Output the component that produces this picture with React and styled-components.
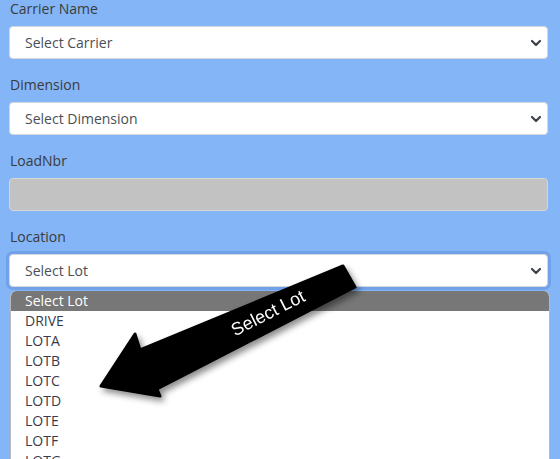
import React from "react";
import styled, { createGlobalStyle } from "styled-components";

const GlobalStyle = createGlobalStyle`
  html, body {
    margin: 0;
    padding: 0;
    background: #84b5f6;
    overflow: hidden;
  }
  body {
    font-family: "Open Sans", "Liberation Sans", sans-serif;
    font-size: 14px;
  }
`;

const Page = styled.div`
  position: relative;
  width: 560px;
  height: 459px;
  overflow: hidden;
`;

const Form = styled.div`
  display: flex;
  flex-direction: column;
  gap: 17px;
  padding-left: 9px;
  width: 539px;
`;

const Group = styled.div`
  display: flex;
  flex-direction: column;
`;

const Label = styled.label`
  display: block;
  line-height: 17px;
  margin-bottom: 9px;
  padding-left: 1px;
  color: #3b3b3b;
  font-size: 14px;
`;

const SelectBox = styled.div`
  box-sizing: border-box;
  height: 33px;
  display: flex;
  align-items: center;
  justify-content: space-between;
  padding: 0 5px 0 15px;
  background: #fff;
  border: 1px solid #d4d8de;
  border-radius: 4px;
  color: #4a4f55;
  line-height: 21px;
  box-shadow: ${(p) => (p.$focused ? "0 0 0 3px rgba(60, 110, 200, 0.28)" : "none")};
`;

const DisabledInput = styled.div`
  box-sizing: border-box;
  height: 33px;
  background: #c2c2c2;
  border: 1px solid #d6d6d6;
  border-radius: 4px;
`;

const Dropdown = styled.div`
  margin-top: -13px;
  margin-left: 1px;
  width: 538px;
  background: #fff;
  border: 1px solid #b8b8b8;
  border-top: none;
  border-radius: 6px 6px 0 0;
  overflow: hidden;
`;

const Option = styled.div`
  height: 20px;
  line-height: 20px;
  padding-left: 14px;
  color: ${(p) => (p.$active ? "#fff" : "#3a3a4a")};
  background: ${(p) => (p.$active ? "#777777" : "transparent")};
`;

const Callout = styled.svg`
  position: absolute;
  left: 0;
  top: 0;
  pointer-events: none;
  filter: drop-shadow(3px 4px 3px rgba(0, 0, 0, 0.45));
`;

const Chevron = () => (
  <svg width="12" height="8" viewBox="0 0 12 8">
    <path d="M2 2l4 4 4-4" fill="none" stroke="#3c4148" strokeWidth="2.2" strokeLinecap="round" strokeLinejoin="round" />
  </svg>
);

const lots = ["DRIVE", "LOTA", "LOTB", "LOTC", "LOTD", "LOTE", "LOTF", "LOTG"];

const App = () => {
  return (
    <Page>
      <GlobalStyle />
      <Form>
        <Group>
          <Label>Carrier Name</Label>
          <SelectBox>
            <span>Select Carrier</span>
            <Chevron />
          </SelectBox>
        </Group>
        <Group>
          <Label>Dimension</Label>
          <SelectBox>
            <span>Select Dimension</span>
            <Chevron />
          </SelectBox>
        </Group>
        <Group>
          <Label>LoadNbr</Label>
          <DisabledInput />
        </Group>
        <Group>
          <Label>Location</Label>
          <SelectBox $focused>
            <span>Select Lot</span>
            <Chevron />
          </SelectBox>
        </Group>
        <Dropdown>
          <Option $active>Select Lot</Option>
          {lots.map((l) => (
            <Option key={l}>{l}</Option>
          ))}
        </Dropdown>
      </Form>
      <Callout width="560" height="459" viewBox="0 0 560 459">
        <polygon
          points="343,266 355,287 157,389 160,396 101,386 135,334 140,350"
          fill="#000"
          stroke="#000"
          strokeWidth="3"
          strokeLinejoin="round"
        />
        <text
          x="268"
          y="319"
          fill="#fff"
          fontFamily="Liberation Sans, Arial, sans-serif"
          fontSize="18"
          textAnchor="middle"
          transform="rotate(-27 268 313)"
        >
          Select Lot
        </text>
      </Callout>
    </Page>
  );
};

export default App;
